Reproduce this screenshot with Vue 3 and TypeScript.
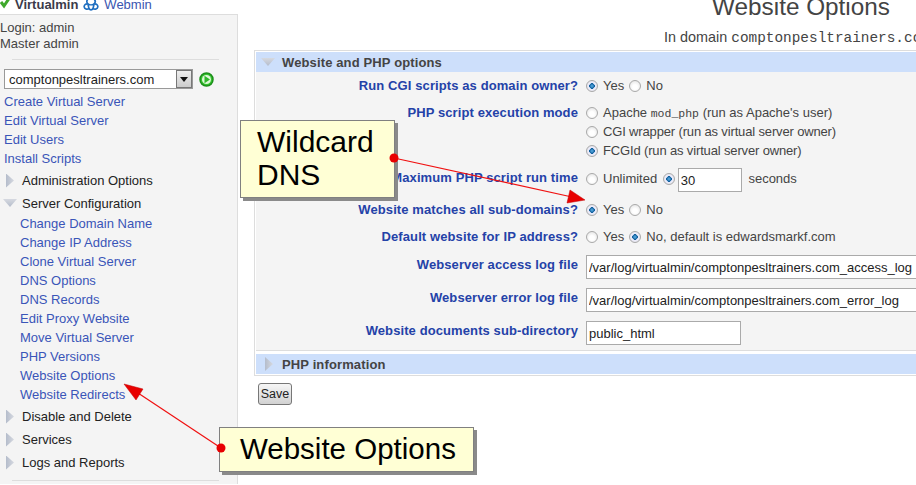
<template>
  <div class="page">
    <aside class="side">
      <div class="top">
        <svg class="check" width="11" height="10" viewBox="0 0 11 10"><path d="M1 3 L4 7 L10 -2" fill="none" stroke="#3fa92c" stroke-width="3" /></svg>
        <b>Virtualmin</b>
        <svg class="wm" width="16" height="11" viewBox="0 0 16 11">
          <path d="M5 -1 C3 1 4 3 5 4 C2.500 3.500 1 5 1.200 6.800 C1.500 9 4 9.800 6 8.500 C7 10.300 9 10.300 10 8.500 C12 9.800 14.500 9 14.800 6.800 C15 5 13.500 3.500 11 4 C12 3 13 1 11 -1 M5 4 C6.500 5 9.500 5 11 4 M6 8.500 C5.500 7 5.200 5.500 5 4 M10 8.500 C10.500 7 10.800 5.500 11 4" fill="none" stroke="#1f6fc0" stroke-width="1.700" />
        </svg>
        <a>Webmin</a>
      </div>
      <div class="panel">
        <div class="login">Login: admin<br />Master admin</div>
        <hr />
        <div class="domain">
          <div class="select">
            <span>comptonpesltrainers.com</span>
            <i class="drop"></i>
          </div>
          <svg width="15" height="15" viewBox="0 0 15 15">
            <circle cx="7.500" cy="7.500" r="6.500" fill="#35c22f" stroke="#1c8f1a" stroke-width="1.500" />
            <circle cx="7.500" cy="7.500" r="4.500" fill="#dff7d8" />
            <path d="M5.500 3.800 L11 7.500 L5.500 11.200 Z" fill="#2fb82a" />
          </svg>
        </div>
        <a v-for="l in topLinks" :key="l" class="link">{{ l }}</a>
        <div class="cat first"><i class="tri"></i>Administration Options</div>
        <div class="cat open"><i class="tri down"></i>Server Configuration</div>
        <a v-for="l in serverLinks" :key="l" class="link sub">{{ l }}</a>
        <div class="cat after"><i class="tri"></i>Disable and Delete</div>
        <div class="cat"><i class="tri"></i>Services</div>
        <div class="cat"><i class="tri"></i>Logs and Reports</div>
        <hr class="end" />
      </div>
    </aside>

    <main class="main">
      <h1>Website Options</h1>
      <p class="sub-title">In domain <tt>comptonpesltrainers.com</tt></p>
      <section class="box">
        <h2 class="bar"><i class="tri down"></i>Website and PHP options</h2>
        <div class="form">
          <label>Run CGI scripts as domain owner?</label>
          <div class="ctl"><i class="radio on"></i>Yes <i class="radio next"></i>No</div>

          <label>PHP script execution mode</label>
          <div class="ctl">
            <div><i class="radio"></i>Apache <tt>mod_php</tt> (run as Apache's user)</div>
            <div class="tight"><i class="radio"></i>CGI wrapper (run as virtual server owner)</div>
            <div class="tight"><i class="radio on"></i>FCGId (run as virtual server owner)</div>
          </div>

          <label>Maximum PHP script run time</label>
          <div class="ctl"><i class="radio"></i>Unlimited <i class="radio on"></i><input class="num" value="30" /> seconds</div>

          <label>Website matches all sub-domains?</label>
          <div class="ctl"><i class="radio on"></i>Yes <i class="radio next"></i>No</div>

          <label>Default website for IP address?</label>
          <div class="ctl"><i class="radio"></i>Yes <i class="radio on next"></i>No, default is edwardsmarkf.com</div>

          <label class="pad">Webserver access log file</label>
          <div class="ctl pad"><input class="long" value="/var/log/virtualmin/comptonpesltrainers.com_access_log" /></div>

          <label class="pad">Webserver error log file</label>
          <div class="ctl pad"><input class="long" value="/var/log/virtualmin/comptonpesltrainers.com_error_log" /></div>

          <label class="pad">Website documents sub-directory</label>
          <div class="ctl pad"><input class="mid" value="public_html" /></div>
        </div>
        <h2 class="bar closed"><i class="tri"></i>PHP information</h2>
      </section>
      <button class="save">Save</button>
    </main>

    <svg class="arrows" width="916" height="485" viewBox="0 0 916 485">
      <line x1="394" y1="158" x2="572" y2="197" stroke="#f01010" stroke-width="1.200" />
      <path d="M585 200 L570 190 L567 203 Z" fill="#e80000" stroke="#c00000" stroke-width=".5" />
      <circle cx="394" cy="158" r="4.500" fill="#e80000" />
      <line x1="221" y1="448" x2="138" y2="393" stroke="#f01010" stroke-width="1.200" />
      <path d="M124 384 L143 389 L136 400 Z" fill="#e80000" stroke="#c00000" stroke-width=".5" />
      <circle cx="221" cy="448" r="4.500" fill="#e80000" />
    </svg>

    <div class="note wild">Wildcard<br />DNS</div>
    <div class="note opts">Website Options</div>
  </div>
</template>

<script setup lang="ts">
const topLinks: string[] = ['Create Virtual Server', 'Edit Virtual Server', 'Edit Users', 'Install Scripts']
const serverLinks: string[] = [
  'Change Domain Name',
  'Change IP Address',
  'Clone Virtual Server',
  'DNS Options',
  'DNS Records',
  'Edit Proxy Website',
  'Move Virtual Server',
  'PHP Versions',
  'Website Options',
  'Website Redirects',
]
</script>

<style>
html,
body {
  margin: 0;
  background: #fff;
  overflow: hidden;
}
</style>

<style scoped>
.page {
  position: relative;
  width: 916px;
  height: 485px;
  overflow: hidden;
  display: flex;
  font: 13px/19px "Liberation Sans", Arial, sans-serif;
  color: #444;
}
.side {
  flex: 0 0 238px;
  width: 238px;
}
.top {
  height: 14px;
  display: flex;
  align-items: center;
  overflow: hidden;
  box-sizing: border-box;
  padding-bottom: 6px;
  white-space: nowrap;
}
.top b {
  margin-left: 4px;
  color: #3b3b4a;
}
.check {
  flex: none;
}
.wm {
  margin: 2px 5px 0 5px;
  flex: none;
}
.top a {
  color: #3a55b0;
}
.panel {
  border-top: 1px solid #ddd;
  border-right: 1px solid #ddd;
  background: #f4f4f4;
  height: 470px;
  box-sizing: border-box;
  padding-top: 4px;
}
.login {
  height: 38px;
  line-height: 16px;
  padding-top: 1px;
  box-sizing: border-box;
}
hr {
  border: 0;
  border-top: 1px solid #ddd;
  margin: 2px 18px 0 12px;
}
.domain {
  display: flex;
  align-items: center;
  gap: 6px;
  margin: 9px 0 3px 4px;
}
.select {
  width: 189px;
  height: 20px;
  box-sizing: border-box;
  background: #fff;
  border: 1px solid #999;
  display: flex;
  align-items: center;
  justify-content: space-between;
  padding-left: 4px;
  font-size: 13px;
  color: #222;
}
.drop {
  width: 16px;
  height: 18px;
  box-sizing: border-box;
  background: linear-gradient(#eee, #ccc);
  border: 1px solid #777;
  position: relative;
}
.drop::after {
  content: "";
  position: absolute;
  left: 3px;
  top: 6px;
  border: 4px solid transparent;
  border-top: 5px solid #111;
  border-bottom: 0;
}
.link {
  display: block;
  padding-left: 4px;
  color: #3a55b8;
}
.link.sub {
  padding-left: 20px;
}
.cat {
  display: flex;
  align-items: center;
  height: 23px;
  padding-left: 6px;
  color: #222;
}
.cat.first {
  margin-top: 1px;
}
.cat.after {
  margin-top: 1px;
}
.cat.open {
  height: 22px;
}
.tri {
  flex: none;
  width: 8px;
  height: 14px;
  margin-right: 8px;
  background: linear-gradient(90deg, #b4bccb, #d6d9e0);
  clip-path: polygon(0 0, 100% 50%, 0 100%);
}
.tri.down {
  width: 14px;
  height: 8px;
  margin: 0 5px 0 -3px;
  background: linear-gradient(#d6d9e0, #b4bccb);
  clip-path: polygon(0 0, 100% 0, 50% 100%);
}
.end {
  margin-top: 6px;
}
.main {
  flex: 0 0 1126px;
  width: 1126px;
}
h1 {
  font-size: 24.300px;
  font-weight: normal;
  line-height: 24px;
  text-align: center;
  margin: -5px 0 0;
  color: #444;
}
.sub-title {
  margin: 9px 0 0;
  font-size: 14.400px;
  line-height: 18px;
  text-align: center;
  padding-right: 8px;
}
tt {
  font-family: "Liberation Mono", monospace;
}
.box {
  margin: 3px 0 0 16px;
  border: 1px solid #ddd;
  padding: 1px;
  width: 1000px;
}
.bar {
  margin: 0;
  height: 20px;
  display: flex;
  align-items: center;
  padding-left: 5px;
  background: #cddffb;
  font-size: 13px;
  font-weight: bold;
  letter-spacing: .13px;
  color: #444;
}
.bar .tri.down {
  margin: 0 7px 0 0;
}
.bar.closed {
  padding-left: 9px;
}
.bar.closed .tri {
  margin-right: 9px;
}
.form {
  background: #f4f4f4;
  display: grid;
  grid-template-columns: 322px 1fr;
  column-gap: 6px;
  row-gap: 8px;
  padding: 4px 0 5px;
  border-bottom: 1px solid #ddd;
  margin-bottom: 3px;
}
.pad {
  padding-top: 1px;
}
label {
  text-align: right;
  font-weight: bold;
  letter-spacing: .1px;
  color: #2442a8;
  white-space: nowrap;
}
.ctl {
  white-space: nowrap;
}
.ctl tt {
  font-size: 11.500px;
  line-height: 1;
}
.tight {
  letter-spacing: -.15px;
}
.radio {
  display: inline-block;
  width: 12px;
  height: 12px;
  box-sizing: border-box;
  border: 1px solid #a9a9a9;
  border-radius: 50%;
  background: radial-gradient(circle at 50% 60%, #fff 30%, #ddd);
  vertical-align: -2px;
  margin: 0 5px 0 2px;
}
.radio.on {
  background: radial-gradient(circle at 50% 50%, #5cb0e8 0, #0f5c98 38%, #eef 42%, #ddd);
}
.radio.next {
  margin-left: 1.500px;
}
input {
  font: 13px "Liberation Sans", Arial, sans-serif;
  color: #222;
  background: #fff;
  border: 1px solid #aaa;
  box-sizing: border-box;
  height: 24px;
  padding: 0 2px;
  margin: 0;
  outline: none;
  vertical-align: middle;
}
.num {
  width: 64px;
  margin: 0 3px 0 -2px;
}
.long {
  width: 400px;
  margin-left: 2px;
}
.mid {
  width: 155px;
  margin-left: 2px;
}
.save {
  display: block;
  margin: 7px 0 0 20px;
  width: 34px;
  height: 22px;
  padding: 0;
  font: 12.500px "Liberation Sans", Arial, sans-serif;
  color: #222;
  background: linear-gradient(#f6f6f6, #d2d2d2);
  border: 1px solid #777;
  border-radius: 3px;
}
.arrows {
  position: absolute;
  left: 0;
  top: 0;
  z-index: 2;
  pointer-events: none;
}
.note {
  position: absolute;
  z-index: 1;
  box-sizing: border-box;
  background: #ffffd5;
  border: 1px solid #808080;
  box-shadow: 3px 3px 0 #8a8a8a;
  font-size: 30px;
  color: #000;
}
.wild {
  left: 240px;
  top: 120px;
  width: 155px;
  height: 78px;
  line-height: 33px;
  padding: 4px 0 0 16px;
}
.opts {
  left: 219px;
  top: 427px;
  width: 255px;
  height: 45px;
  font-size: 29.500px;
  line-height: 41px;
  padding-left: 20px;
}
</style>
